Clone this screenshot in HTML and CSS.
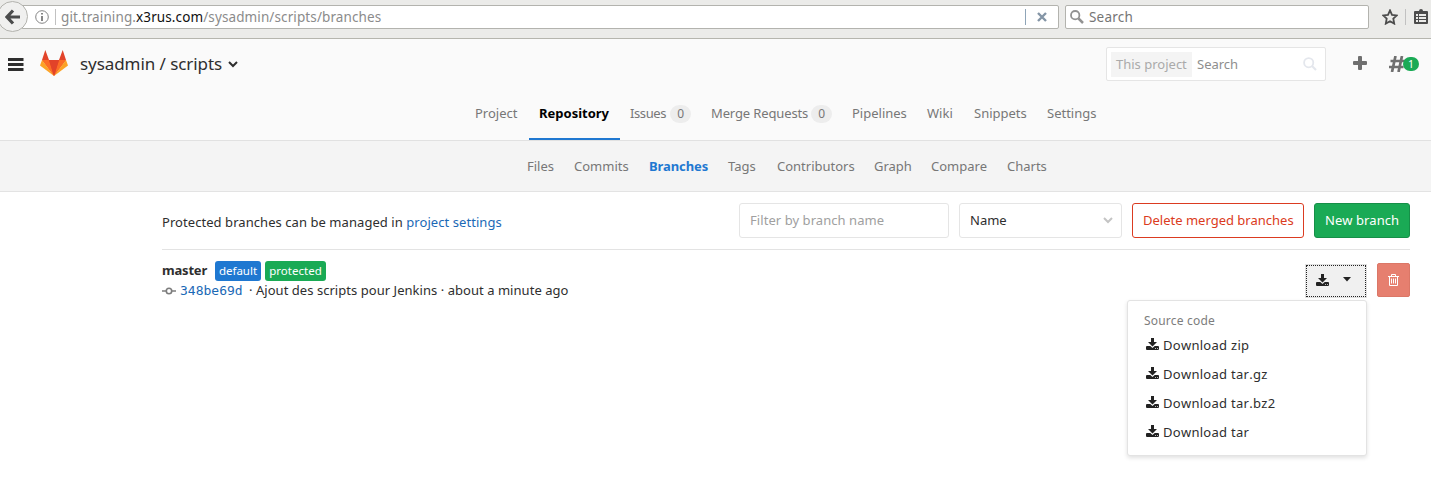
FILE: index.html
```html
<!DOCTYPE html>
<html lang="en">
<head>
<meta charset="utf-8">
<title>Branches · sysadmin / scripts</title>
<link rel="stylesheet" href="styles.css">
</head>
<body>
<svg class="defs" width="0" height="0">
  <symbol id="download" viewBox="0 0 13 12"><path d="M5 0h3v4h3L6.500 8.500 2 4h3zM0 9q0-1 1-1h3.300L6.500 10 8.700 8H12q1 0 1 1v2q0 1-1 1H1q-1 0-1-1z"/><path d="M9 10h1v1H9zM11 10h1v1h-1z" fill="#bbb"/></symbol>
</svg>
<div class="browser">
  <div class="back"><svg width="16" height="16" viewBox="0 0 16 16"><path d="M8 1.500 2 8l6 6.500M2.500 8H15" fill="none" stroke="#4b4c4c" stroke-width="3.200"/></svg></div>
  <div class="address">
    <svg class="info" width="14" height="14" viewBox="0 0 14 14"><circle cx="7" cy="7" r="6.300" fill="none" stroke="#858585"/><path d="M6 3h2v1.600H6zM6 6h2v5H6z" fill="#858585"/></svg>
    <span class="bar"></span>
    <span class="url">git.training.<b>x3rus.com</b>/sysadmin/scripts/branches</span>
    <span class="bar stop-bar"></span>
    <svg class="stop" width="10" height="10" viewBox="0 0 10 10"><path d="m1 1 8 8M9 1 1 9" stroke="#8495a6" stroke-width="2.400"/></svg>
  </div>
  <div class="web-search">
    <svg width="14" height="14" viewBox="0 0 14 14" fill="none" stroke="#929292"><circle cx="5.200" cy="5.200" r="4.200" stroke-width="1.800"/><path d="m8.500 8.500 4.500 4.500" stroke-width="2.500"/></svg>
    <span>Search</span>
  </div>
  <svg class="star" width="16" height="16" viewBox="0 0 16 16"><path d="m8 1.400 2 4.400 4.900.6-3.600 3.300.9 4.900L8 12.200l-4.200 2.400.9-4.900L1.100 6.400 6 5.800z" fill="none" stroke="#4c4c4c" stroke-width="1.800"/></svg>
  <span class="bar tool-bar"></span>
  <svg class="clip" width="14" height="15" viewBox="0 0 14 15"><path d="M5 2q0-2 2-2t2 2h4q1 0 1 1v11q0 1-1 1H1q-1 0-1-1V3q0-1 1-1z" fill="#4c4c4c"/><path d="M2 5h2v2H2zM5 5h7v2H5zM2 8h2v2H2zM5 8h7v2H5zM2 11h2v2H2zM5 11h7v2H5z" fill="#ebebe9"/></svg>
</div>
<header class="header">
  <div class="top">
    <svg class="menu" width="16" height="13" viewBox="0 0 16 13"><path d="M0 0h15.500v3H0zM0 5h15.500v3H0zM0 10h15.500v3H0z" fill="#2e2e2e"/></svg>
    <svg class="logo" width="28" height="26" viewBox="0 0 28 26"><path fill="#e24329" d="M5.300 0 9 10h10l3.700-10L26 10 14 26 2 10z"/><path fill="#fc6d26" d="m2 10 12 16L9 10zM26 10 14 26l5-16z"/><path fill="#fca326" d="M2 10 0 15.500 14 26zM26 10l2 5.500L14 26z"/><path fill="#e24329" d="M9 10h10l-5 16z"/></svg>
    <span class="title">sysadmin / scripts</span>
    <svg class="caret" width="10" height="7" viewBox="0 0 10 7"><path d="m1 1 4 4 4-4" fill="none" stroke="#2e2e2e" stroke-width="2"/></svg>
    <div class="search"><span class="scope">This project</span><span class="hint">Search</span>
      <svg width="14" height="14" viewBox="0 0 14 14" fill="none" stroke="#e4e7ed"><circle cx="5.700" cy="5.700" r="4.600" stroke-width="1.800"/><path d="m9 9 4 4" stroke-width="2.200"/></svg></div>
    <svg class="plus" width="14" height="14" viewBox="0 0 14 14"><path d="M5 1q0-1 1-1h2q1 0 1 1v4h4q1 0 1 1v2q0 1-1 1H9v4q0 1-1 1H6q-1 0-1-1V9H1Q0 9 0 8V6q0-1 1-1h4z" fill="#6f6f6f"/></svg>
    <svg class="hash" width="16" height="16" viewBox="0 0 16 16"><path d="M6.500 0 3 16M13 0 9.500 16M1.500 5H16M0 11h14.500" stroke="#6f6f6f" stroke-width="2.700"/></svg>
    <span class="todo">1</span>
  </div>
  <nav class="nav">
    <a class="w64">Project</a><a class="w91 active">Repository</a><a class="w81 tight">Issues<i>0</i></a><a class="w141 snug">Merge Requests<i>0</i></a><a class="w75">Pipelines</a><a class="w47">Wiki</a><a class="w73">Snippets</a><a class="w70">Settings</a>
  </nav>
</header>
<nav class="subnav">
  <a class="w47">Files</a><a class="w75">Commits</a><a class="w79 active">Branches</a><a class="w49">Tags</a><a class="w97">Contributors</a><a class="w57">Graph</a><a class="w76">Compare</a><a class="w59">Charts</a>
</nav>
<main class="content">
  <div class="controls">
    <p class="managed">Protected branches can be managed in <a>project settings</a></p>
    <div class="filter">Filter by branch name</div>
    <div class="sort">Name<svg width="10" height="7" viewBox="0 0 10 7"><path d="m1 1 4 4 4-4" fill="none" stroke="#c4c4c4" stroke-width="2"/></svg></div>
    <div class="delete">Delete merged branches</div>
    <div class="new">New branch</div>
  </div>
  <div class="branch">
    <div class="details">
      <div class="name-row"><b class="name">master</b><span class="label blue">default</span><span class="label green">protected</span></div>
      <div class="commit"><svg width="14" height="8" viewBox="0 0 14 8"><path d="M0 4h4M10 4h4" stroke="#7d7d7d" stroke-width="1.600"/><circle cx="7" cy="4" r="2.700" fill="none" stroke="#7d7d7d" stroke-width="1.600"/></svg><span class="sha">348be69d</span><span class="message">· Ajout des scripts pour Jenkins · about a minute ago</span></div>
    </div>
    <div class="download">
      <svg width="13" height="12"><use href="#download"/></svg>
      <svg width="8" height="5" viewBox="0 0 8 5"><path d="M0 0h8L4 4.500z"/></svg>
      <div class="dropdown">
        <div class="heading">Source code</div>
        <div class="item"><svg width="13" height="12"><use href="#download"/></svg><span>Download zip</span></div>
        <div class="item"><svg width="13" height="12"><use href="#download"/></svg><span>Download tar.gz</span></div>
        <div class="item"><svg width="13" height="12"><use href="#download"/></svg><span>Download tar.bz2</span></div>
        <div class="item"><svg width="13" height="12"><use href="#download"/></svg><span>Download tar</span></div>
      </div>
    </div>
    <div class="remove"><svg width="11" height="12" viewBox="0 0 11 12" fill="none" stroke="#fff"><path d="M0 2.500h11M3.500 2V.5h4V2M1.500 3v8.500h8V3M3.500 4.500v5M5.500 4.500v5M7.500 4.500v5"/></svg></div>
  </div>
</main>
</body>
</html>
```
FILE: styles.css
```css
* { box-sizing: border-box; }
body { margin: 0; height: 492px; overflow: hidden; background: #fff; color: #2e2e2e; font: 13px/20px "Noto Sans", sans-serif; white-space: nowrap; }
svg { display: block; flex: none; }
.defs { position: absolute; }

.browser { display: flex; align-items: flex-start; height: 39px; background: #ebebe9; border-bottom: 1px solid #b5b5ae; padding-top: 5px; }
.back { width: 31px; height: 31px; margin: -4px -7px 0 -3px; border: 1px solid #b3b3ae; border-radius: 50%; background: #f0f0ef; display: flex; align-items: center; justify-content: center; z-index: 1; flex: none; }
.address { width: 1038px; height: 24px; border: 1px solid #b3b3ae; border-radius: 2px; background: #fff; display: flex; align-items: center; padding-left: 13px; flex: none; }
.bar { width: 1px; height: 16px; background: #c1c1c1; margin: 0 5px 0 6px; flex: none; }
.url { color: #8b8b8b; font-size: 13.5px; letter-spacing: .11px; width: 965px; }
.url b { font-weight: 400; color: #111; }
.stop-bar { margin: 0 11px 0 -1px; background: #8fa5b8; }
.web-search { width: 304px; height: 24px; margin-left: 6px; border: 1px solid #b3b3ae; border-radius: 2px; background: #fff; display: flex; align-items: center; padding-left: 4px; gap: 5px; color: #757575; font-size: 13.5px; letter-spacing: .2px; flex: none; }
.star { margin: 4px 0 0 13px; }
.tool-bar { margin: 4px 8px 0 7px; }
.clip { margin-top: 4px; }

.header { height: 102px; background: #fafafa; border-bottom: 1px solid #e1e1e1; }
.top { display: flex; height: 50px; padding: 0 0 0 8px; align-items: center; }
.logo { margin: -3px 12px 0 16px; }
.title { font-size: 17px; letter-spacing: -.07px; line-height: 24px; width: 148px; }
.search { width: 220px; height: 34px; margin-left: 868px; border: 1px solid #e5e5e5; background: #fff; border-radius: 2px; display: flex; align-items: center; padding-left: 4px; flex: none; }
.scope { width: 81px; height: 25px; background: #f4f4f4; color: #aaa; line-height: 25px; padding-left: 5px; }
.hint { width: 111px; padding-left: 5px; color: #8e8e8e; }
.plus { margin: -2px 22px 0 27px; }
.hash { margin-right: -2px; }
.todo { width: 16px; height: 14px; border-radius: 7px; background: #1aaa55; color: #fff; font-size: 10.5px; line-height: 14px; text-align: center; flex: none; }
.nav, .subnav { display: flex; color: #777; }
.nav { padding-left: 465px; height: 51px; }
.nav a, .subnav a { padding: 0 10px; line-height: 50px; flex: none; }
.nav a { display: flex; align-items: center; height: 48px; }
.nav .active { color: #000; font-weight: 700; border-bottom: 2px solid #1f78d1; height: 51px; line-height: 49px; }
.nav i { width: 21px; height: 18px; border-radius: 9px; background: #ededed; font: 12px/18px "Noto Sans", sans-serif; text-align: center; margin-left: auto; position: relative; top: 1px; }
.nav .tight { letter-spacing: -.4px; }
.nav .snug { letter-spacing: -.13px; }
.subnav { height: 51px; padding-left: 517px; background: #f4f4f4; border-bottom: 1px solid #e3e3e3; }
.subnav .active { color: #1f78d1; font-weight: 700; letter-spacing: -.1px; }
.w47 { width: 47px; } .w49 { width: 49px; } .w57 { width: 57px; } .w59 { width: 59px; }
.w64 { width: 64px; } .w70 { width: 70px; } .w73 { width: 73px; } .w75 { width: 75px; }
.w76 { width: 76px; } .w79 { width: 79px; } .w81 { width: 81px; } .w91 { width: 91px; }
.w97 { width: 97px; } .w141 { width: 141px; }

.content { padding: 0 21px 0 162px; }
.controls { height: 58px; border-bottom: 1px solid #e3e3e3; display: flex; gap: 10px; padding-top: 11px; }
.controls > div { height: 35px; line-height: 33px; border: 1px solid #e5e5e5; border-radius: 3px; padding-left: 10px; flex: none; }
.managed { margin: 9px auto 0 0; letter-spacing: .06px; }
.managed a { color: #1b69b6; }
.filter { width: 210px; color: #a0a0a0; letter-spacing: .06px; }
.sort { width: 163px; display: flex; align-items: center; justify-content: space-between; padding-right: 8px; }
.controls .delete { width: 172px; color: #db3b21; border-color: #db3b21; }
.controls .new { width: 96px; color: #fff; background: #1aaa55; border-color: #168f48; letter-spacing: .1px; }
.branch { display: flex; align-items: flex-start; }
.details { flex: 1; padding-top: 11px; }
.name-row { display: flex; height: 20px; }
.name { width: 53px; letter-spacing: -.2px; line-height: 18px; }
.label { height: 20px; border-radius: 3px; color: #fff; font-size: 11.5px; text-align: center; }
.blue { width: 46px; background: #1f78d1; margin-right: 4px; }
.green { width: 61px; background: #1aaa55; }
.commit { display: flex; align-items: center; height: 20px; }
.sha { width: 72px; padding-left: 4px; font: 13px/20px "DejaVu Sans Mono", monospace; color: #1b69b6; }
.message { height: 20px; line-height: 18px; letter-spacing: .04px; margin-left: -3px; padding-left: 3px; }
.message { margin-left: -2px; }
.download { position: relative; width: 62px; height: 34px; margin: 14px 10px 0 0; border: 1px solid #e0e0e0; background: #f0f0f0; outline: 1px dotted #222; outline-offset: -2px; display: flex; align-items: center; padding: 0 0 3px 10px; gap: 14px; fill: #222; }
.remove { width: 33px; height: 34px; margin-top: 13px; border: 1px solid #db7767; border-radius: 2px; background: #e67f6f; display: flex; align-items: center; justify-content: center; }
.dropdown { position: absolute; top: 35px; right: -1px; width: 240px; height: 156px; padding: 10px 16px; background: #fff; border: 1px solid #e3e3e3; border-radius: 3px; box-shadow: 0 2px 4px rgba(0,0,0,.12); }
.heading { color: #7d7d7d; font-size: 12px; letter-spacing: .2px; height: 19px; }
.item { display: flex; align-items: center; gap: 4px; height: 29px; padding-left: 2px; letter-spacing: .28px; font-kerning: none; }
.item svg { margin-top: -1px; }
```
